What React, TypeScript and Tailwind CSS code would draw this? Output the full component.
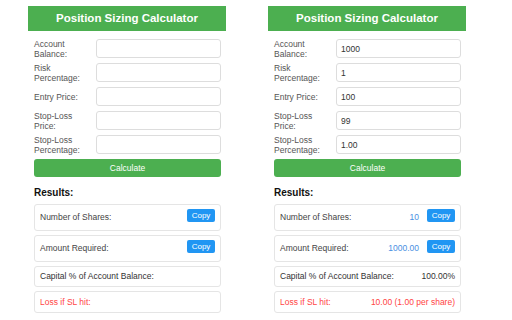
const FIELDS = [
  { label: 'Account Balance:', value: '1000' },
  { label: 'Risk Percentage:', value: '1' },
  { label: 'Entry Price:', value: '100' },
  { label: 'Stop-Loss Price:', value: '99' },
  { label: 'Stop-Loss Percentage:', value: '1.00' },
];

function CopyButton() {
  return (
    <button className="mb-[4px] h-[13px] w-[28px] shrink-0 rounded-[2px] bg-[#2196f3] text-[8px] leading-[13px] text-white">
      Copy
    </button>
  );
}

function Panel({ filled }: { filled: boolean }) {
  return (
    <div className="w-[198px] shrink-0">
      <div className="flex h-[25px] items-center justify-center bg-[#4caf50] text-[11.5px] font-bold text-white">
        Position Sizing Calculator
      </div>
      <div className="pl-[6px] pr-[5px] pt-[8px]">
        <div className="flex flex-col gap-[5px]">
          {FIELDS.map((f) => (
            <div key={f.label} className="flex h-[19px] items-center">
              <label className="w-[62px] shrink-0 pr-[8px] text-[8.5px] leading-[10px] text-[#555]">
                {f.label}
              </label>
              <input
                readOnly
                value={filled ? f.value : ''}
                className="h-[19px] min-w-0 flex-1 rounded-[3px] border border-[#ddd] bg-white px-[4px] text-[8.5px] text-[#333] outline-none"
              />
            </div>
          ))}
        </div>
        <button className="mt-[4px] h-[18px] w-full rounded-[3px] bg-[#4caf50] text-[8.5px] text-white">
          Calculate
        </button>
        <div className="mt-[9px] text-[10px] font-bold leading-[12px] text-[#111]">Results:</div>
        <div className="mt-[5px] flex flex-col gap-[4px] text-[8.5px]">
          <div className="flex h-[27px] items-center rounded-[3px] border border-[#e5e5e5] px-[5px] text-[#444]">
            <span className="flex-1">Number of Shares:</span>
            {filled && <span className="mr-[8px] text-[#4a90e2]">10</span>}
            <CopyButton />
          </div>
          <div className="flex h-[27px] items-center rounded-[3px] border border-[#e5e5e5] px-[5px] text-[#444]">
            <span className="flex-1">Amount Required:</span>
            {filled && <span className="mr-[8px] text-[#4a90e2]">1000.00</span>}
            <CopyButton />
          </div>
          <div className="flex h-[21px] items-center rounded-[3px] border border-[#e5e5e5] px-[5px] text-[#333]">
            <span className="flex-1">Capital % of Account Balance:</span>
            {filled && <span>100.00%</span>}
          </div>
          <div className="flex h-[22px] items-center rounded-[3px] border border-[#e5e5e5] px-[5px] text-[#f44]">
            <span className="flex-1">Loss if SL hit:</span>
            {filled && <span>10.00 (1.00 per share)</span>}
          </div>
        </div>
      </div>
    </div>
  );
}

export default function App() {
  return (
    <div
      className="flex h-[320px] w-[512px] gap-[42px] bg-white pl-[28px] pt-[6px]"
      style={{ fontFamily: '"Liberation Sans", Arial, sans-serif' }}
    >
      <Panel filled={false} />
      <Panel filled={true} />
    </div>
  );
}
